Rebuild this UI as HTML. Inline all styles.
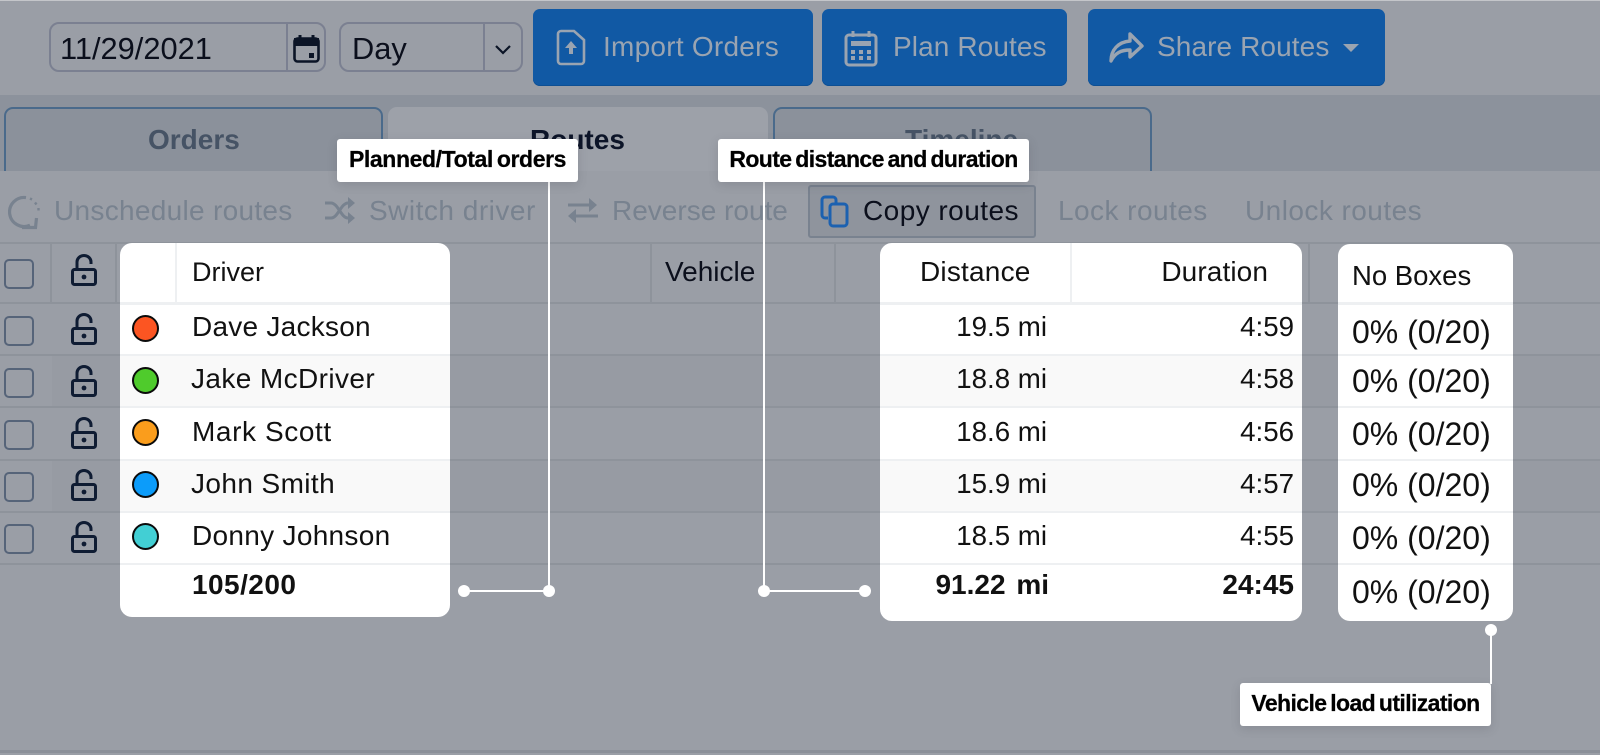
<!DOCTYPE html>
<html><head><meta charset="utf-8"><style>
html,body{margin:0;padding:0;background:#9a9ea6}
#p{position:relative;width:1600px;height:755px;overflow:hidden;background:#9a9ea6;font-family:"Liberation Sans",sans-serif;color:#0b0f1c}
#p div,#p svg{position:absolute}
.t{white-space:nowrap;height:40px;line-height:40px;font-size:28px}
.r{text-align:right}
.d{color:#78828f}
.w{color:#9aa4b1}
.b{background:#1159a4;border-radius:7px;top:9px;height:77px;box-shadow:inset 0 -1px 0 #0e4f93}
.in{border:2px solid #7b8091;border-radius:10px;top:22px;height:46px;box-sizing:content-box}
.tab{top:107px;height:64px;border-radius:9px 9px 0 0;box-sizing:border-box}
.hl{left:0;width:1600px;height:2px;background:#8e939b}
.alt{left:52px;width:1548px;height:50px;background:#979ba3}
.cb{left:4px;width:26px;height:26px;border:2px solid #566479;border-radius:5px}
.card{background:#fff}
.cl{height:2px;background:#eef0f2}
.ca{background:#f9f9f9;height:50px}
.dot{left:132px;width:23px;height:23px;border:2.5px solid #0b0b0b;border-radius:50%}
.lab{background:#fff;border-radius:3px;color:#000;font-weight:700;font-size:23px;line-height:41px;height:43px;text-align:center;white-space:nowrap;letter-spacing:-.6px;word-spacing:-2px;-webkit-text-stroke:.25px #000;box-shadow:0 3px 10px rgba(60,60,70,.18)}
.wl{background:#fff}
.cd{width:12px;height:12px;border-radius:50%;background:#fff}
.v{font-size:32px;left:1352px;color:#111}
.n{color:#111}
.m{letter-spacing:.35px}
.h{font-size:28px}
</style></head><body><div id="p">
<div style="left:0;top:0;width:1600px;height:1px;background:#c4c6ca"></div>

<div class="in" style="left:49px;width:273px;"></div>
<div style="left:286px;top:23px;width:2px;height:48px;background:#7b8091"></div>
<div class="t" style="left:60px;top:29px;font-size:30.8px">11/29/2021</div>
<svg style="left:293px;top:35px" width="27" height="28" viewBox="0 0 27 28"><path d="M7 0v4M20 0v4" stroke="#0b1426" stroke-width="3"/><rect x="1.5" y="3.5" width="24" height="23" rx="3" fill="none" stroke="#0b1426" stroke-width="2.6"/><rect x="1" y="3" width="25" height="8" fill="#0b1426"/><rect x="16" y="18" width="5" height="5" fill="#0b1426"/></svg>
<div class="in" style="left:339px;width:180px;"></div>
<div style="left:483px;top:23px;width:2px;height:48px;background:#7b8091"></div>
<div class="t" style="left:352px;top:29px;font-size:30.8px">Day</div>
<svg style="left:494px;top:43px" width="18" height="12" viewBox="0 0 18 12"><path d="M2 3l7 7 7-7" fill="none" stroke="#0b1426" stroke-width="2.2"/></svg>

<div class="b" style="left:533px;width:280px"></div>
<svg style="left:556px;top:29px" width="30" height="37" viewBox="0 0 30 37"><path d="M5 2h13l10 9v21a3 3 0 0 1-3 3H5a3 3 0 0 1-3-3V5a3 3 0 0 1 3-3z" fill="none" stroke="#9aa4b1" stroke-width="2.6"/><path d="M15 12l-6 7h4v6h4v-6h4z" fill="#9aa4b1"/></svg>
<div class="t w" style="left:603px;top:27px;letter-spacing:.25px">Import Orders</div>
<div class="b" style="left:822px;width:245px"></div>
<svg style="left:844px;top:30px" width="34" height="37" viewBox="0 0 34 37"><rect x="2" y="5" width="30" height="30" rx="3" fill="none" stroke="#9aa4b1" stroke-width="3"/><path d="M9 1v6M25 1v6" stroke="#9aa4b1" stroke-width="3"/><rect x="7" y="11" width="20" height="5" fill="#9aa4b1"/><path d="M7 20h4v4H7zM15 20h4v4h-4zM23 20h4v4h-4zM7 26h4v4H7zM15 26h4v4h-4zM23 26h4v4h-4z" fill="#9aa4b1"/></svg>
<div class="t w" style="left:893px;top:27px;letter-spacing:.1px">Plan Routes</div>
<div class="b" style="left:1088px;width:297px"></div>
<svg style="left:1108px;top:31px" width="37" height="33" viewBox="0 0 37 33"><path d="M22 3l12 12-12 11v-7C13 19 7 22 3 30 3 19 10 11 22 10z" fill="none" stroke="#9aa4b1" stroke-width="3.4" stroke-linejoin="round"/></svg>
<div class="t w" style="left:1157px;top:27px;letter-spacing:.1px">Share Routes</div>
<svg style="left:1342px;top:43px" width="18" height="10" viewBox="0 0 18 10"><path d="M1 1h16l-8 8z" fill="#9aa4b1"/></svg>

<div style="left:0;top:95px;width:1600px;height:76px;background:#8c929c"></div>
<div class="tab" style="left:4px;width:379px;background:#8b919b;border:2px solid #4a6a8b;border-bottom:0"></div>
<div class="tab" style="left:388px;width:380px;background:#9da1a9"></div>
<div class="tab" style="left:773px;width:379px;background:#8b919b;border:2px solid #4a6a8b;border-bottom:0"></div>
<div class="t" style="left:148px;top:120px;font-weight:700;color:#465365">Orders</div>
<div class="t" style="left:530px;top:120px;font-weight:700;color:#0c1428">Routes</div>
<div class="t" style="left:905px;top:120px;font-weight:700;color:#465365">Timeline</div>

<div style="left:0;top:171px;width:1600px;height:71px;background:#9a9ea6"></div>
<svg style="left:8px;top:194px" width="34" height="36" viewBox="0 0 34 36"><path d="M18 3.600A14.500 14.500 0 1 0 22 31.200" fill="none" stroke="#78828f" stroke-width="3.200"/><path d="M14 33.500H27.500L28.500 24" fill="none" stroke="#78828f" stroke-width="3.200"/><path d="M22 4.500l2 1M27 8.500l1.500 2M30.500 14v2.500" stroke="#78828f" stroke-width="2.400"/></svg>
<div class="t d" style="left:54px;top:191px;letter-spacing:.3px">Unschedule routes</div>
<svg style="left:325px;top:197px" width="31" height="27" viewBox="0 0 31 27"><path d="M0 6h6c7 0 10 15 17 15h3M0 21h6c7 0 10-15 17-15h3" fill="none" stroke="#78828f" stroke-width="3"/><path d="M23 0l7 6-7 6zM23 15l7 6-7 6z" fill="#78828f"/></svg>
<div class="t d" style="left:369px;top:191px;letter-spacing:.5px">Switch driver</div>
<svg style="left:567px;top:197px" width="31" height="27" viewBox="0 0 31 27"><path d="M1 8h24M6 19h25" fill="none" stroke="#78828f" stroke-width="3"/><path d="M22 1l8 7-8 7zM9 12l-8 7 8 7z" fill="#78828f"/></svg>
<div class="t d" style="left:612px;top:191px">Reverse route</div>
<div style="left:808px;top:185px;width:224px;height:49px;border:2px solid #79828f;border-radius:3px;background:#8f949d"></div>
<svg style="left:820px;top:195px" width="29" height="33" viewBox="0 0 29 33"><path d="M8 23H5a3 3 0 0 1-3-3V5a3 3 0 0 1 3-3h8a3 3 0 0 1 3 3v3" fill="none" stroke="#1c61b0" stroke-width="3"/><rect x="10" y="9" width="17" height="22" rx="3" fill="none" stroke="#1c61b0" stroke-width="3"/></svg>
<div class="t" style="left:863px;top:191px;letter-spacing:.45px">Copy routes</div>
<div class="t d" style="left:1058px;top:191px;letter-spacing:.45px">Lock routes</div>
<div class="t d" style="left:1245px;top:191px;letter-spacing:.45px">Unlock routes</div>

<div class="hl" style="top:242px"></div>
<div class="alt" style="top:356px"></div>
<div class="alt" style="top:461px"></div>
<div class="hl" style="top:302px"></div><div class="hl" style="top:354px"></div><div class="hl" style="top:406px"></div><div class="hl" style="top:459px"></div><div class="hl" style="top:511px"></div><div class="hl" style="top:563px"></div>
<div style="left:50px;top:243px;width:2px;height:59px;background:#8e939b"></div>
<div style="left:115px;top:243px;width:2px;height:59px;background:#8e939b"></div>
<div style="left:650px;top:243px;width:2px;height:59px;background:#8e939b"></div>
<div style="left:834px;top:243px;width:2px;height:59px;background:#8e939b"></div>
<div style="left:1308px;top:243px;width:2px;height:59px;background:#8e939b"></div>
<div class="t h" style="left:665px;top:252px">Vehicle</div>

<div class="cb" style="top:259px"></div><div class="cb" style="top:316px"></div><div class="cb" style="top:368px"></div><div class="cb" style="top:420px"></div><div class="cb" style="top:472px"></div><div class="cb" style="top:524px"></div>
<svg style="left:70px;top:254px" width="28" height="33" viewBox="0 0 28 33"><rect x="2.500" y="15.500" width="23" height="15" rx="2" fill="none" stroke="#0f1c33" stroke-width="3"/><path d="M7 15V8a7 6.500 0 0 1 14 0v2" fill="none" stroke="#0f1c33" stroke-width="3"/><circle cx="14" cy="23" r="2.400" fill="#0f1c33"/></svg>
<svg style="left:70px;top:313px" width="28" height="33" viewBox="0 0 28 33"><rect x="2.500" y="15.500" width="23" height="15" rx="2" fill="none" stroke="#0f1c33" stroke-width="3"/><path d="M7 15V8a7 6.500 0 0 1 14 0v2" fill="none" stroke="#0f1c33" stroke-width="3"/><circle cx="14" cy="23" r="2.400" fill="#0f1c33"/></svg>
<svg style="left:70px;top:365px" width="28" height="33" viewBox="0 0 28 33"><rect x="2.500" y="15.500" width="23" height="15" rx="2" fill="none" stroke="#0f1c33" stroke-width="3"/><path d="M7 15V8a7 6.500 0 0 1 14 0v2" fill="none" stroke="#0f1c33" stroke-width="3"/><circle cx="14" cy="23" r="2.400" fill="#0f1c33"/></svg>
<svg style="left:70px;top:417px" width="28" height="33" viewBox="0 0 28 33"><rect x="2.500" y="15.500" width="23" height="15" rx="2" fill="none" stroke="#0f1c33" stroke-width="3"/><path d="M7 15V8a7 6.500 0 0 1 14 0v2" fill="none" stroke="#0f1c33" stroke-width="3"/><circle cx="14" cy="23" r="2.400" fill="#0f1c33"/></svg>
<svg style="left:70px;top:469px" width="28" height="33" viewBox="0 0 28 33"><rect x="2.500" y="15.500" width="23" height="15" rx="2" fill="none" stroke="#0f1c33" stroke-width="3"/><path d="M7 15V8a7 6.500 0 0 1 14 0v2" fill="none" stroke="#0f1c33" stroke-width="3"/><circle cx="14" cy="23" r="2.400" fill="#0f1c33"/></svg>
<svg style="left:70px;top:521px" width="28" height="33" viewBox="0 0 28 33"><rect x="2.500" y="15.500" width="23" height="15" rx="2" fill="none" stroke="#0f1c33" stroke-width="3"/><path d="M7 15V8a7 6.500 0 0 1 14 0v2" fill="none" stroke="#0f1c33" stroke-width="3"/><circle cx="14" cy="23" r="2.400" fill="#0f1c33"/></svg>

<!-- left card -->
<div class="card" style="left:120px;top:243px;width:330px;height:374px;border-radius:12px;overflow:hidden"></div>
<div class="ca" style="left:120px;top:356px;width:330px"></div>
<div class="ca" style="left:120px;top:461px;width:330px"></div>
<div class="cl" style="left:120px;top:302px;width:330px;height:3px"></div>
<div class="cl" style="left:120px;top:354px;width:330px"></div><div class="cl" style="left:120px;top:406px;width:330px"></div><div class="cl" style="left:120px;top:459px;width:330px"></div><div class="cl" style="left:120px;top:511px;width:330px"></div><div class="cl" style="left:120px;top:563px;width:330px"></div>
<div class="cl" style="left:175px;top:243px;width:2px;height:59px"></div>
<div class="t n" style="left:192px;top:252px;font-size:27px">Driver</div>
<div class="t n m" style="left:192px;top:307px;letter-spacing:.25px">Dave Jackson</div>
<div class="t n m" style="left:191px;top:359px;letter-spacing:.4px">Jake McDriver</div>
<div class="t n m" style="left:192px;top:412px;letter-spacing:.6px">Mark Scott</div>
<div class="t n m" style="left:191px;top:464px;letter-spacing:.4px">John Smith</div>
<div class="t n m" style="left:192px;top:516px;letter-spacing:.3px">Donny Johnson</div>
<div class="t n" style="left:192px;top:565px;font-weight:700;letter-spacing:.45px">105/200</div>
<div class="dot" style="top:315px;background:#fc5522"></div>
<div class="dot" style="top:367px;background:#4fcb2c"></div>
<div class="dot" style="top:419px;background:#fa9d1c"></div>
<div class="dot" style="top:471px;background:#0c9cfa"></div>
<div class="dot" style="top:523px;background:#42cfd4"></div>

<!-- middle card -->
<div class="card" style="left:880px;top:243px;width:422px;height:378px;border-radius:12px"></div>
<div class="ca" style="left:880px;top:356px;width:422px"></div>
<div class="ca" style="left:880px;top:461px;width:422px"></div>
<div class="cl" style="left:880px;top:302px;width:422px;height:3px"></div>
<div class="cl" style="left:880px;top:354px;width:422px"></div><div class="cl" style="left:880px;top:406px;width:422px"></div><div class="cl" style="left:880px;top:459px;width:422px"></div><div class="cl" style="left:880px;top:511px;width:422px"></div><div class="cl" style="left:880px;top:563px;width:422px"></div>
<div class="cl" style="left:1070px;top:243px;width:2px;height:59px"></div>
<div class="t n h" style="left:920px;top:252px;letter-spacing:.2px">Distance</div>
<div class="t n r h" style="left:1100px;width:168px;top:252px;letter-spacing:.1px">Duration</div>
<div class="t n r" style="left:900px;width:147px;top:307px;font-size:27.7px">19.5 mi</div>
<div class="t n r" style="left:900px;width:147px;top:359px;font-size:27.7px">18.8 mi</div>
<div class="t n r" style="left:900px;width:147px;top:412px;font-size:27.7px">18.6 mi</div>
<div class="t n r" style="left:900px;width:147px;top:464px;font-size:27.7px">15.9 mi</div>
<div class="t n r" style="left:900px;width:147px;top:516px;font-size:27.7px">18.5 mi</div>
<div class="t n r h" style="left:900px;width:149px;top:565px;font-weight:700;word-spacing:3px">91.22 mi</div>
<div class="t n r" style="left:1150px;width:144px;top:307px;font-size:27.7px">4:59</div>
<div class="t n r" style="left:1150px;width:144px;top:359px;font-size:27.7px">4:58</div>
<div class="t n r" style="left:1150px;width:144px;top:412px;font-size:27.7px">4:56</div>
<div class="t n r" style="left:1150px;width:144px;top:464px;font-size:27.7px">4:57</div>
<div class="t n r" style="left:1150px;width:144px;top:516px;font-size:27.7px">4:55</div>
<div class="t n r h" style="left:1150px;width:144px;top:565px;font-weight:700">24:45</div>

<!-- right card -->
<div class="card" style="left:1338px;top:244px;width:175px;height:377px;border-radius:12px"></div>
<div class="cl" style="left:1338px;top:302px;width:175px;height:3px"></div>
<div class="cl" style="left:1338px;top:354px;width:175px"></div><div class="cl" style="left:1338px;top:406px;width:175px"></div><div class="cl" style="left:1338px;top:459px;width:175px"></div><div class="cl" style="left:1338px;top:511px;width:175px"></div><div class="cl" style="left:1338px;top:563px;width:175px"></div>
<div class="t n" style="left:1352px;top:256px;font-size:27.5px">No Boxes</div>
<div class="t v" style="top:312px">0% (0/20)</div>
<div class="t v" style="top:361px">0% (0/20)</div>
<div class="t v" style="top:414px">0% (0/20)</div>
<div class="t v" style="top:465px">0% (0/20)</div>
<div class="t v" style="top:518px">0% (0/20)</div>
<div class="t v" style="top:572px">0% (0/20)</div>

<!-- connectors -->
<div class="wl" style="left:548px;top:182px;width:2px;height:409px"></div>
<div class="wl" style="left:464px;top:590px;width:85px;height:2px"></div>
<div class="cd" style="left:458px;top:585px"></div><div class="cd" style="left:543px;top:585px"></div>
<div class="wl" style="left:763px;top:182px;width:2px;height:409px"></div>
<div class="wl" style="left:764px;top:590px;width:101px;height:2px"></div>
<div class="cd" style="left:758px;top:585px"></div><div class="cd" style="left:859px;top:585px"></div>
<div class="wl" style="left:1490px;top:630px;width:2px;height:54px"></div>
<div class="cd" style="left:1485px;top:624px"></div>

<div class="lab" style="left:337px;top:139px;width:241px;letter-spacing:-.4px">Planned/Total orders</div>
<div class="lab" style="left:718px;top:139px;width:311px">Route distance and duration</div>
<div class="lab" style="left:1240px;top:683px;width:251px">Vehicle load utilization</div>

<div style="left:0;top:750px;width:1600px;height:3px;background:#8b9099"></div>
</div></body></html>
